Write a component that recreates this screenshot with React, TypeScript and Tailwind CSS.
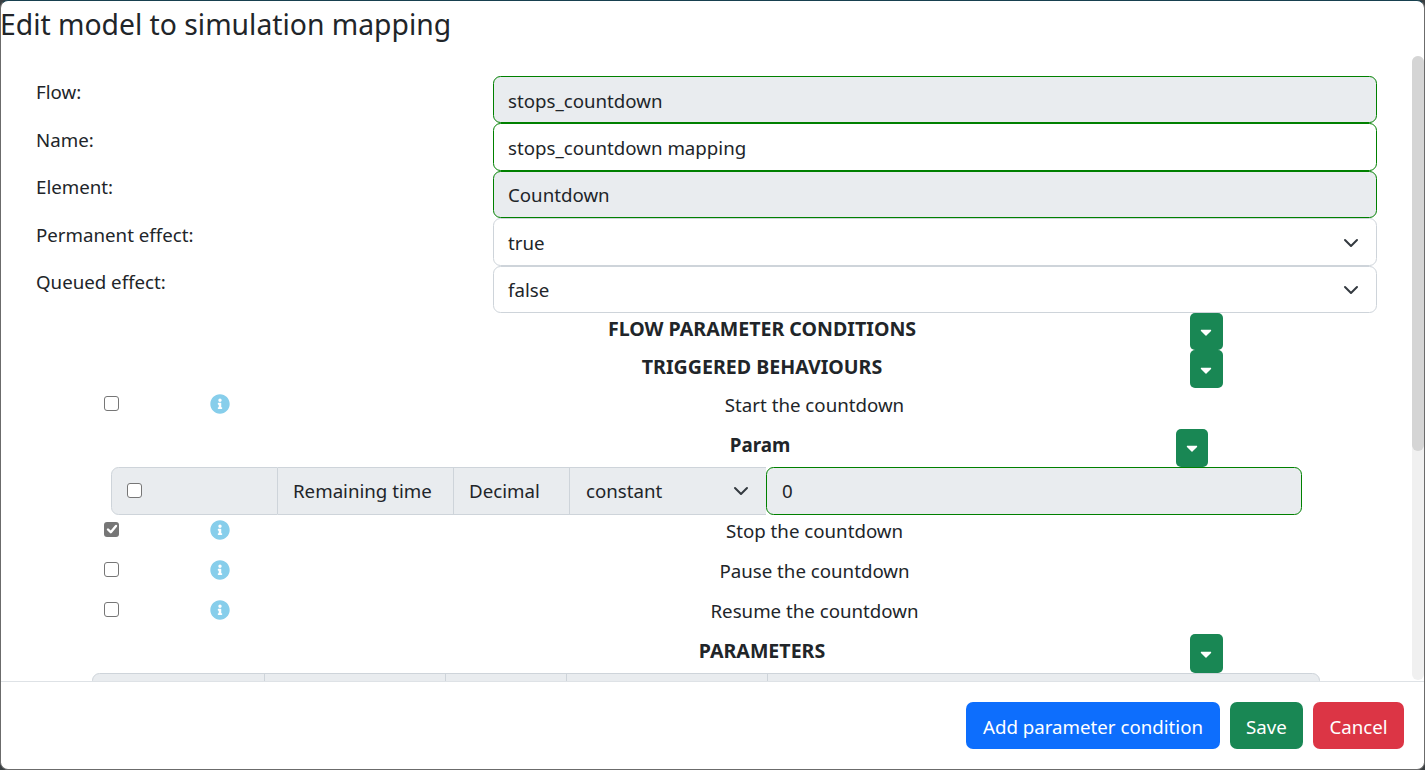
import React from "react";
import { FaInfoCircle, FaCaretDown } from "react-icons/fa";

function Chevron() {
  return (
    <svg viewBox="0 0 16 16" className="w-[16px] h-[16px] shrink-0" fill="none" stroke="#343a40" strokeWidth="2" strokeLinecap="round" strokeLinejoin="round">
      <path d="m2 5 6 6 6-6" />
    </svg>
  );
}

function Check({ checked }: { checked?: boolean }) {
  return checked ? (
    <span className="block w-[15px] h-[15px] rounded-[3px] bg-[#767676] flex items-center justify-center shrink-0">
      <svg viewBox="0 0 12 12" className="w-[12px] h-[12px]" fill="none" stroke="#fff" strokeWidth="2.4" strokeLinecap="round" strokeLinejoin="round">
        <path d="M2 6.5 4.8 9.2 10 3" />
      </svg>
    </span>
  ) : (
    <span className="block w-[15px] h-[15px] rounded-[3px] border border-[#767676] bg-white shrink-0" />
  );
}

function FormRow({ label, value, kind }: { label: string; value: string; kind: "readonly" | "input" | "select" }) {
  const cls =
    kind === "readonly"
      ? "border-[#008000] bg-[#e9ecef]"
      : kind === "input"
        ? "border-[#008000] bg-white"
        : "border-[#ced4da] bg-white";
  return (
    <div className="flex h-[47.4px]">
      <div className="w-[492px] pl-[35px] pt-[1.4px] text-[18.7px] leading-[30px] text-[#212529]">{label}</div>
      <div className={`w-[884px] h-[47.4px] border rounded-[7.5px] flex items-center justify-between pl-[14px] pr-[17px] pt-[2px] text-[18.7px] text-[#212529] ${cls}`}>
        <span>{value}</span>
        {kind === "select" && <Chevron />}
      </div>
    </div>
  );
}

function Heading({ text, h }: { text: string; h: string }) {
  return (
    <div className={`flex pl-[333px] ${h}`}>
      <div className="w-[856px] text-center font-bold text-[19.6px] leading-[30px] pt-[1.5px] text-[#212529]">{text}</div>
      <button className="w-[33px] h-full bg-[#198754] rounded-[5px] flex items-center justify-center text-white">
        <FaCaretDown className="w-[18px] h-[18px] -ml-[1px] mt-[1px]" />
      </button>
    </div>
  );
}

function Behaviour({ text, checked }: { text: string; checked?: boolean }) {
  return (
    <div className="flex h-[40px] items-start">
      <div className="pl-[103px] pt-[7.5px] w-[209px]">
        <Check checked={checked} />
      </div>
      <div className="pt-[6px] text-[#87ceeb]">
        <FaInfoCircle className="w-[20px] h-[20px]" />
      </div>
      <div className="ml-[21px] w-[1127px] text-center pt-[1.5px] text-[18.7px] leading-[30px] text-[#212529]">{text}</div>
    </div>
  );
}

export default function App() {
  return (
    <div className="w-[1425px] h-[770px] bg-[#3a3f42] overflow-hidden" style={{ fontFamily: '"Noto Sans", "Open Sans", sans-serif' }}>
      <div className="w-full h-full bg-white rounded-[8px] border border-[#6b6b6b] border-t-[#17404f] flex flex-col overflow-hidden">
        <div className="h-[50px] shrink-0 text-[28.3px] leading-[46px] text-[#212529] -ml-[1px] whitespace-nowrap">
          Edit model to simulation mapping
        </div>
        <div className="flex-1 min-h-0 flex overflow-hidden">
          <div className="flex-1 min-w-0 overflow-hidden pt-[25px]">
            <FormRow label="Flow:" value="stops_countdown" kind="readonly" />
            <FormRow label="Name:" value="stops_countdown mapping" kind="input" />
            <FormRow label="Element:" value="Countdown" kind="readonly" />
            <FormRow label="Permanent effect:" value="true" kind="select" />
            <FormRow label="Queued effect:" value="false" kind="select" />
            <Heading text="FLOW PARAMETER CONDITIONS" h="h-[37.5px]" />
            <Heading text="TRIGGERED BEHAVIOURS" h="h-[38px]" />
            <Behaviour text="Start the countdown" />
            <div className="flex h-[38.5px] pl-[343px]">
              <div className="w-[832px] text-center font-bold text-[18.8px] leading-[30px] pt-[1.5px] text-[#212529]">Param</div>
              <button className="w-[32px] h-[38px] mt-[0.5px] bg-[#198754] rounded-[5px] flex items-center justify-center text-white">
                <FaCaretDown className="w-[18px] h-[18px] -ml-[1px] mt-[1px]" />
              </button>
            </div>
            <div className="flex ml-[110px] w-[1191px] h-[48px] -mb-[0.5px] text-[18.7px] text-[#212529]">
              <div className="w-[167px] bg-[#e9ecef] border border-[#ced4da] rounded-l-[7.5px] flex items-center pl-[15px]">
                <Check />
              </div>
              <div className="w-[176px] bg-[#e9ecef] border-y border-r border-[#ced4da] flex items-center pl-[15px] pt-[1px] whitespace-nowrap">Remaining time</div>
              <div className="w-[116px] bg-[#e9ecef] border-y border-r border-[#ced4da] flex items-center pl-[15px] pt-[1px]">Decimal</div>
              <div className="w-[196px] bg-[#e9ecef] border-y border-[#ced4da] flex items-center justify-between pl-[16px] pr-[17px] pt-[1px]">
                <span>constant</span>
                <Chevron />
              </div>
              <div className="flex-1 bg-[#e9ecef] border border-[#008000] rounded-[7.5px] flex items-center pl-[15px] pt-[1px]">0</div>
            </div>
            <Behaviour text="Stop the countdown" checked />
            <Behaviour text="Pause the countdown" />
            <Behaviour text="Resume the countdown" />
            <Heading text="PARAMETERS" h="h-[38.5px]" />
            <div className="flex ml-[91px] w-[1228px] h-[48px] bg-[#e9ecef] border border-[#ced4da] rounded-t-[7.5px]">
              <div className="w-[172px] border-r border-[#ced4da]" />
              <div className="w-[181px] border-r border-[#ced4da]" />
              <div className="w-[121px] border-r border-[#ced4da]" />
              <div className="w-[201px] border-r border-[#ced4da]" />
            </div>
          </div>
          <div className="w-[12px] shrink-0 mt-[5px] mb-[1px] bg-[#f0f0f0] rounded-[6px]">
            <div className="h-[395px] bg-[#d5d5d5] rounded-[6px]" />
          </div>
        </div>
        <div className="h-[88px] shrink-0 border-t border-[#dee2e6] flex justify-end items-start gap-[10px] pt-[20px] pr-[20px] text-[18.7px] text-white">
          <button className="w-[254px] h-[47px] pt-[3px] bg-[#0d6efd] rounded-[7px]">Add parameter condition</button>
          <button className="w-[73px] h-[47px] pt-[3px] bg-[#198754] rounded-[7px]">Save</button>
          <button className="w-[91px] h-[47px] pt-[3px] bg-[#dc3545] rounded-[7px]">Cancel</button>
        </div>
      </div>
    </div>
  );
}
